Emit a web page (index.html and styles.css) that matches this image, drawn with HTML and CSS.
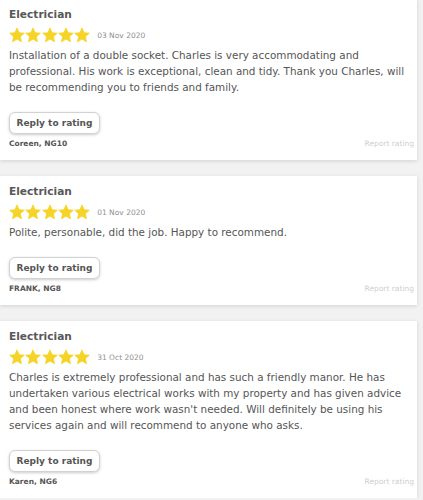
FILE: index.html
```html
<!DOCTYPE html>
<html>
<head>
<meta charset="utf-8">
<link rel="stylesheet" href="styles.css">
</head>
<body>
<div class="list">
  <div class="card first">
    <div class="title">Electrician</div>
    <div class="rating">
      <span class="stars">
        <svg viewBox="1 1.2 22 21"><path d="M12 17.27L18.18 21l-1.64-7.03L22 9.24l-7.19-.61L12 2 9.19 8.63 2 9.24l5.46 4.73L5.82 21z"/></svg>
        <svg viewBox="1 1.2 22 21"><path d="M12 17.27L18.18 21l-1.64-7.03L22 9.24l-7.19-.61L12 2 9.19 8.63 2 9.24l5.46 4.73L5.82 21z"/></svg>
        <svg viewBox="1 1.2 22 21"><path d="M12 17.27L18.18 21l-1.64-7.03L22 9.24l-7.19-.61L12 2 9.19 8.63 2 9.24l5.46 4.73L5.82 21z"/></svg>
        <svg viewBox="1 1.2 22 21"><path d="M12 17.27L18.18 21l-1.64-7.03L22 9.24l-7.19-.61L12 2 9.19 8.63 2 9.24l5.46 4.73L5.82 21z"/></svg>
        <svg viewBox="1 1.2 22 21"><path d="M12 17.27L18.18 21l-1.64-7.03L22 9.24l-7.19-.61L12 2 9.19 8.63 2 9.24l5.46 4.73L5.82 21z"/></svg>
      </span>
      <span class="date">03 Nov 2020</span>
    </div>
    <p class="body">Installation of a double socket. Charles is very accommodating and professional. His work is exceptional, clean and tidy. Thank you Charles, will be recommending you to friends and family.</p>
    <button class="reply">Reply to rating</button>
    <div class="foot"><span class="author">Coreen, NG10</span><span class="report">Report rating</span></div>
  </div>

  <div class="card">
    <div class="title">Electrician</div>
    <div class="rating">
      <span class="stars">
        <svg viewBox="1 1.2 22 21"><path d="M12 17.27L18.18 21l-1.64-7.03L22 9.24l-7.19-.61L12 2 9.19 8.63 2 9.24l5.46 4.73L5.82 21z"/></svg>
        <svg viewBox="1 1.2 22 21"><path d="M12 17.27L18.18 21l-1.64-7.03L22 9.24l-7.19-.61L12 2 9.19 8.63 2 9.24l5.46 4.73L5.82 21z"/></svg>
        <svg viewBox="1 1.2 22 21"><path d="M12 17.27L18.18 21l-1.64-7.03L22 9.24l-7.19-.61L12 2 9.19 8.63 2 9.24l5.46 4.73L5.82 21z"/></svg>
        <svg viewBox="1 1.2 22 21"><path d="M12 17.27L18.18 21l-1.64-7.03L22 9.24l-7.19-.61L12 2 9.19 8.63 2 9.24l5.46 4.73L5.82 21z"/></svg>
        <svg viewBox="1 1.2 22 21"><path d="M12 17.27L18.18 21l-1.64-7.03L22 9.24l-7.19-.61L12 2 9.19 8.63 2 9.24l5.46 4.73L5.82 21z"/></svg>
      </span>
      <span class="date">01 Nov 2020</span>
    </div>
    <p class="body">Polite, personable, did the job. Happy to recommend.</p>
    <button class="reply">Reply to rating</button>
    <div class="foot"><span class="author">FRANK, NG8</span><span class="report">Report rating</span></div>
  </div>

  <div class="card">
    <div class="title">Electrician</div>
    <div class="rating">
      <span class="stars">
        <svg viewBox="1 1.2 22 21"><path d="M12 17.27L18.18 21l-1.64-7.03L22 9.24l-7.19-.61L12 2 9.19 8.63 2 9.24l5.46 4.73L5.82 21z"/></svg>
        <svg viewBox="1 1.2 22 21"><path d="M12 17.27L18.18 21l-1.64-7.03L22 9.24l-7.19-.61L12 2 9.19 8.63 2 9.24l5.46 4.73L5.82 21z"/></svg>
        <svg viewBox="1 1.2 22 21"><path d="M12 17.27L18.18 21l-1.64-7.03L22 9.24l-7.19-.61L12 2 9.19 8.63 2 9.24l5.46 4.73L5.82 21z"/></svg>
        <svg viewBox="1 1.2 22 21"><path d="M12 17.27L18.18 21l-1.64-7.03L22 9.24l-7.19-.61L12 2 9.19 8.63 2 9.24l5.46 4.73L5.82 21z"/></svg>
        <svg viewBox="1 1.2 22 21"><path d="M12 17.27L18.18 21l-1.64-7.03L22 9.24l-7.19-.61L12 2 9.19 8.63 2 9.24l5.46 4.73L5.82 21z"/></svg>
      </span>
      <span class="date">31 Oct 2020</span>
    </div>
    <p class="body">Charles is extremely professional and has such a friendly manor. He has undertaken various electrical works with my property and has given advice and been honest where work wasn't needed. Will definitely be using his services again and will recommend to anyone who asks.</p>
    <button class="reply">Reply to rating</button>
    <div class="foot"><span class="author">Karen, NG6</span><span class="report">Report rating</span></div>
  </div>
</div>
</body>
</html>
```

FILE: styles.css
```css
html, body {
  margin: 0;
  padding: 0;
  background: #f2f2f2;
  font-family: "DejaVu Sans", "Liberation Sans", sans-serif;
  color: #555;
}
.list {
  display: flex;
  flex-direction: column;
  gap: 16px;
  padding-right: 6px;
}
.card {
  background: #fff;
  box-shadow: 0 1px 4px rgba(0,0,0,0.14);
  padding: 7px 3px 9px 9px;
  display: flex;
  flex-direction: column;
  align-items: flex-start;
}
.card.first {
  margin-top: -1px;
}
.title {
  font-size: 10.6px;
  font-weight: 700;
  line-height: 16px;
  color: #585858;
}
.rating {
  display: flex;
  align-items: center;
  margin-top: 4px;
  height: 18px;
}
.stars {
  display: flex;
  gap: 0.3px;
}
.stars svg {
  width: 16px;
  height: 16px;
  fill: #f6d327;
  stroke: #f6d327;
  stroke-width: 1.2;
  stroke-linejoin: round;
}
.date {
  font-size: 7.5px;
  color: #8f8f8f;
  margin-left: 7px;
}
.body {
  margin: 3px 0 0 0;
  font-size: 10.4px;
  line-height: 16px;
  color: #555;
}
.reply {
  margin-top: 17px;
  height: 22px;
  width: 91px;
  padding: 0;
  font-family: inherit;
  font-size: 9px;
  font-weight: 700;
  color: #555;
  background: #fff;
  border: 1px solid #d2d2d2;
  border-radius: 6px;
  box-shadow: 0 1px 3px rgba(0,0,0,0.2);
}
.foot {
  margin-top: 3px;
  display: flex;
  justify-content: space-between;
  align-self: stretch;
  line-height: 14px;
}
.author {
  font-size: 7.5px;
  font-weight: 700;
  color: #555;
}
.report {
  font-size: 7.5px;
  color: #cfcfcf;
}
```
